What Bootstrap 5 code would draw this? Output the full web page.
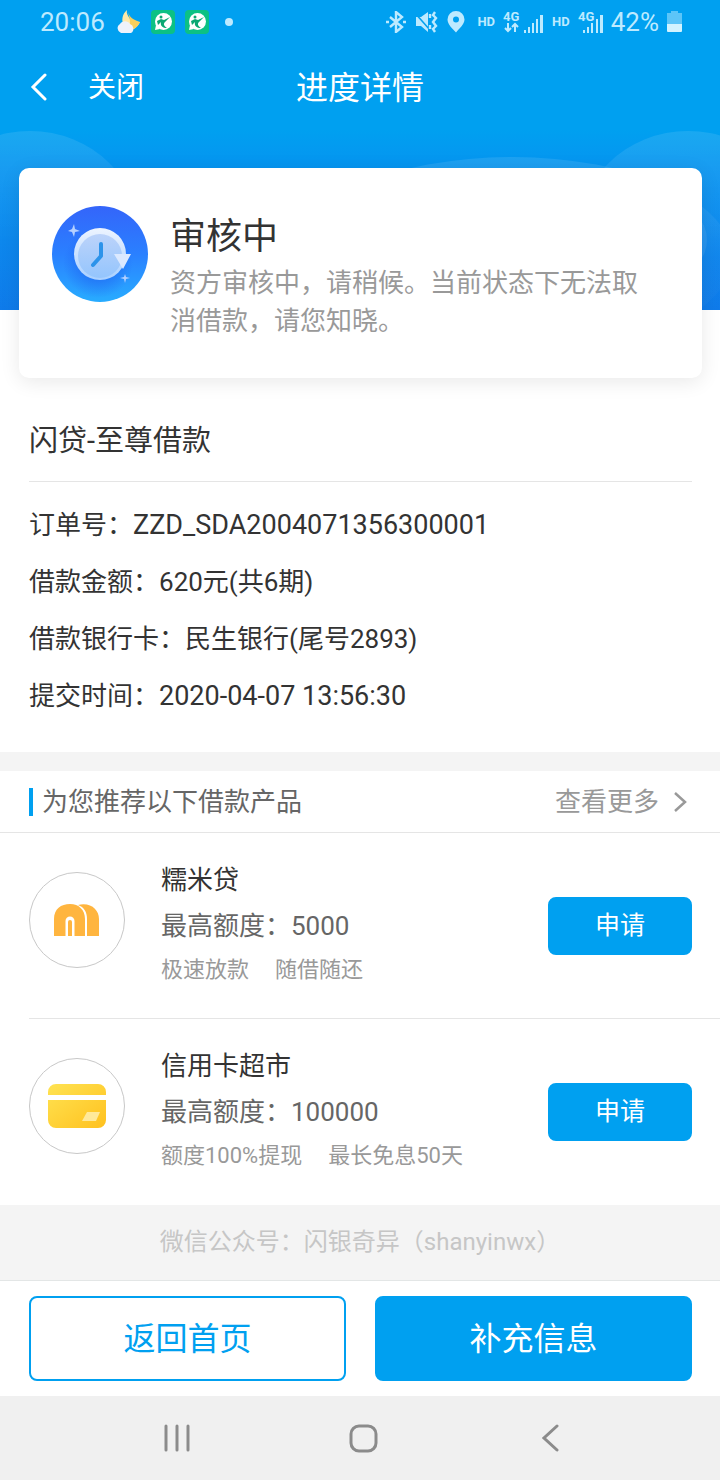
<!DOCTYPE html>
<html lang="zh-CN">
<head>
<meta charset="utf-8">
<meta name="viewport" content="width=device-width, initial-scale=1">
<title>进度详情</title>
<link href="https://cdn.jsdelivr.net/npm/bootstrap@5.3.0/dist/css/bootstrap.min.css" rel="stylesheet">
<style>
  :root { --brand: #00a0f0; --ink: #333; --soft: #999; --line: #e5e5e5; }
  body { font-family: Roboto, "Noto Sans CJK SC", sans-serif; font-size: 26px; line-height: 38px; color: var(--ink); background: #fff; }
  svg { display: block; flex: none; }
  .plain-btn { background: none; border: 0; padding: 0; color: inherit; }

  .status-bar { height: 44px; padding: 0 38px 0 40px; background: var(--brand); color: #bdeaff; }
  .status-hd { font-size: 13px; font-weight: 700; line-height: 20px; }
  .status-dot { width: 8px; height: 8px; border-radius: 50%; background: #bdeaff; }
  .badge-gap { margin-right: 10px; }

  .title-bar { display: grid; grid-template-columns: 1fr auto 1fr; height: 86px; padding: 2px 30px 0; background: var(--brand); color: #fff; }
  .title-bar h1 { font-size: 32px; line-height: 44px; font-weight: 400; }
  .close-btn { font-size: 28px; line-height: 40px; margin-left: 40px; }

  .hero { padding: 38px 18px 0 19px; background: linear-gradient(#00a0f0, #0694f0 38px, #0a78ea) 0 0 / 100% 180px no-repeat; }
  .hero-art { width: 100%; height: 180px; }
  .status-card { border-radius: 10px; padding: 38px 40px 38px 33px; gap: 22px; background: #fff; box-shadow: 0 4px 20px rgba(0, 0, 0, .09); }
  .status-card h2 { font-size: 36px; line-height: 50px; font-weight: 400; margin-bottom: 2px; }
  .status-copy { padding-top: 6px; color: var(--soft); }
  .status-copy h2 { color: var(--ink); }

  .order { padding: 41px 28px 27px 29px; }
  .order h2 { font-size: 29px; line-height: 44px; font-weight: 400; margin: 0; padding-bottom: 18px; border-bottom: 1px solid var(--line); }
  .order dl { margin: 0; padding-top: 15px; line-height: 57px; }
  .order dt { font-weight: 400; }
  .figures { font-size: 27px; }

  .strip { height: 19px; background: #f4f4f4; }
  .rec-head { height: 62px; padding: 0 33px 0 29px; border-bottom: 1px solid var(--line); }
  .rec-head h2 { font-size: 26px; line-height: 28px; font-weight: 400; color: #666; border-left: 4px solid var(--brand); padding-left: 9px; }
  .rec-head a { color: var(--soft); gap: 14px; }

  .product { margin-left: 29px; padding: 0 28px 0 0; height: 186px; }
  .product:not(:last-child) { border-bottom: 1px solid var(--line); }
  .product-logo { width: 96px; height: 96px; border: 1px solid #c8c8c8; border-radius: 50%; margin: 0 36px 12px 0; }
  .product-copy { padding-bottom: 4px; line-height: 46px; color: #666; }
  .product-copy h3 { font-size: 26px; line-height: 46px; font-weight: 400; color: var(--ink); margin: 0; }
  .tags { gap: 26px; font-size: 22px; line-height: 42px; color: var(--soft); }
  .btn-brand { --bs-btn-bg: var(--brand); --bs-btn-color: #fff; --bs-btn-border-color: var(--brand); --bs-btn-hover-bg: #0090dc; --bs-btn-hover-color: #fff; --bs-btn-border-width: 2px; --bs-btn-border-radius: 8px; }
  .btn-frame { --bs-btn-bg: #fff; --bs-btn-color: var(--brand); --bs-btn-border-color: var(--brand); --bs-btn-border-width: 2px; --bs-btn-hover-bg: #eef9ff; --bs-btn-hover-color: var(--brand); --bs-btn-border-radius: 8px; }
  .apply { width: 144px; height: 58px; font-size: 25px; line-height: 36px; padding: 0; }

  .account { padding: 18px 0 19px; font-size: 24px; color: #c6c6c6; background: #f4f4f4; }
  .actions { padding: 15px 28px 15px 29px; gap: 29px; border-top: 1px solid #e3e6e6; }
  .actions .btn { flex: 1 1 0; height: 85px; font-size: 32px; line-height: 44px; }
  .system-nav { height: 84px; padding: 0 76px 0 83px; background: #f0f0f0; }
</style>
</head>
<body>

<div class="status-bar d-flex align-items-center justify-content-between">
  <div class="d-flex align-items-center">
    <span>20:06</span>
    <svg class="ms-2" width="34" height="26" viewBox="0 0 34 26" aria-hidden="true">
      <path d="M14 1C9 5 8 12 11 17s11 6 16-4c-4 1-8 0-10-3s-4-6-3-9z" fill="#ffe9a8"/>
      <path d="M14 1c2 5 3 9 13 12-3 7-9 9-13 7 5-2 3-12 0-19z" fill="#f8cf5c"/>
      <path d="M8 24a5 5 0 0 1-1-9 6 6 0 0 1 10 0 5 5 0 0 1 1 9z" fill="#eef2fb"/>
    </svg>
    <svg class="ms-1 badge-gap" width="24" height="24" viewBox="0 0 24 24" aria-hidden="true">
      <rect width="24" height="24" rx="4" fill="#0cc184"/><circle cx="12.5" cy="11.500" r="8.500" fill="#fff"/><path d="M5 15l-1 5 5-1z" fill="#fff"/>
      <path d="M6 11l4-2 3 1 6-3-5 5c-2 2-1 4 2 6-4 0-7-2-6-6l-3 3z" fill="#0aa873"/><circle cx="10" cy="7" r="1.500" fill="#0aa873"/>
    </svg>
    <svg width="24" height="24" viewBox="0 0 24 24" aria-hidden="true">
      <rect width="24" height="24" rx="4" fill="#0cc184"/><circle cx="12.5" cy="11.500" r="8.500" fill="#fff"/><path d="M5 15l-1 5 5-1z" fill="#fff"/>
      <path d="M6 11l4-2 3 1 6-3-5 5c-2 2-1 4 2 6-4 0-7-2-6-6l-3 3z" fill="#0aa873"/><circle cx="10" cy="7" r="1.500" fill="#0aa873"/>
    </svg>
    <span class="status-dot ms-3"></span>
  </div>
  <div class="d-flex align-items-center gap-2">
    <svg width="21" height="22" viewBox="0 0 21 22" fill="none" stroke="currentColor" stroke-width="2.4" aria-hidden="true">
      <path d="M4 6l12 10-6 5V1l6 5L4 16"/><path d="M0 11h3M17 11h3"/>
    </svg>
    <svg width="24" height="22" viewBox="0 0 24 22" aria-hidden="true">
      <path d="M1 6h5l7-5v20l-7-6H1z" fill="currentColor"/><path d="M0 2l15 17" stroke="#00a0f0" stroke-width="1.500"/>
      <path d="M15 3v4M15 14v4M20 1l-2 3 3 3-3 4 3 4-3 3 2 3" fill="none" stroke="currentColor" stroke-width="2.400"/>
    </svg>
    <svg width="18" height="22" viewBox="0 0 18 22" aria-hidden="true">
      <path d="M9 0a8.500 8.500 0 0 0-8.500 8.500c0 5 5 9 8.500 13 3-4 8.500-8 8.500-13A8.500 8.500 0 0 0 9 0zm0 5.500a3 3 0 1 1 0 6 3 3 0 0 1 0-6z" fill="currentColor" fill-rule="evenodd"/>
    </svg>
    <span class="status-hd ms-1">HD</span>
    <svg width="41" height="28" viewBox="0 0 41 28" fill="currentColor" aria-label="4G">
      <text x="0" y="13" font-size="13" font-weight="700">4G</text>
      <path d="M5 15v8M2 20l3 3 3-3M12 24v-8M9 19l3-3 3 3" fill="none" stroke="currentColor" stroke-width="2"/>
      <path d="M21 22h2v3h-2zM25 19h2v6h-2zM29 15h2v10h-2zM33 11h2v14h-2zM37 7h3v18h-3z"/>
    </svg>
    <span class="status-hd">HD</span>
    <svg width="25" height="28" viewBox="0 0 25 28" fill="currentColor" aria-label="4G">
      <path d="M5 22h2v3H5zM9 19h2v6H9zM13 15h2v10h-2zM18 11h2v14h-2zM22 7h3v18h-3z"/>
      <text x="0" y="13" font-size="13" font-weight="700">4G</text>
    </svg>
    <span>42%</span>
    <svg width="15" height="22" viewBox="0 0 15 22" aria-hidden="true">
      <path d="M4 0h7v2h4v12H0V2h4z" fill="#5cc5f8"/><path d="M0 13h15v7a1 1 0 0 1-1 1H1a1 1 0 0 1-1-1z" fill="#d2f3ff"/>
    </svg>
  </div>
</div>

<header class="title-bar align-items-center">
  <div class="d-flex align-items-center">
    <button class="plain-btn" type="button" aria-label="返回">
      <svg width="18" height="30" viewBox="0 0 18 30" fill="none" stroke="#fff" stroke-width="3" stroke-linecap="round"><path d="M15 2L3 14l12 12"/></svg>
    </button>
    <button class="plain-btn close-btn" type="button">关闭</button>
  </div>
  <h1 class="m-0">进度详情</h1>
</header>

<main>
  <section class="hero position-relative">
    <svg class="hero-art position-absolute top-0 start-0" viewBox="0 0 720 180" preserveAspectRatio="none" aria-hidden="true">
      <defs><linearGradient id="haze" x1="0" y1="0" x2="0" y2="1"><stop offset="0" stop-color="#fff" stop-opacity=".1"/><stop offset=".5" stop-color="#fff" stop-opacity=".02"/></linearGradient></defs>
      <ellipse cx="30" cy="110" rx="112" ry="109" fill="url(#haze)"/>
      <ellipse cx="688" cy="110" rx="112" ry="109" fill="url(#haze)"/>
      <ellipse cx="512" cy="127" rx="220" ry="100" fill="url(#haze)"/>
      <circle cx="672" cy="110" r="35" fill="#fff" fill-opacity=".08"/>
    </svg>
    <div class="status-card position-relative d-flex align-items-start">
      <svg width="96" height="96" viewBox="0 0 96 96" aria-hidden="true">
        <defs>
          <linearGradient id="disc" x1="0" y1="0" x2="0" y2="1"><stop offset="0" stop-color="#3465fa"/><stop offset=".5" stop-color="#2a80ff"/><stop offset="1" stop-color="#28acff"/></linearGradient>
          <linearGradient id="face" x1="0" y1="0" x2="0" y2="1"><stop offset="0" stop-color="#bcd3fa"/><stop offset="1" stop-color="#94c5fd"/></linearGradient>
          <linearGradient id="rim" x1="0" y1="0" x2="0" y2="1"><stop offset="0" stop-color="#edf4ff"/><stop offset="1" stop-color="#a9d0ff"/></linearGradient>
          <radialGradient id="shade"><stop offset=".5" stop-color="#1e60f0" stop-opacity=".5"/><stop offset="1" stop-color="#1e60f0" stop-opacity="0"/></radialGradient>
        </defs>
        <circle cx="48" cy="48" r="48" fill="url(#disc)"/>
        <circle cx="46" cy="57" r="35" fill="url(#shade)"/>
        <circle cx="48" cy="48" r="26" fill="url(#rim)"/>
        <circle cx="48" cy="50" r="22" fill="url(#face)"/>
        <path d="M62 48h17L71 63z" fill="#dbe9ff"/>
        <path d="M49 38v12l-8 9" fill="none" stroke="#2c93ea" stroke-width="4" stroke-linecap="round" stroke-linejoin="round"/>
        <path d="M22 18l1 5 5 2-5 1-1 5-2-5-4-1 4-2zM73 68l1 3 4 1-4 1-1 4-1-4-4-1 4-1z" fill="#b5d0ff"/>
      </svg>
      <div class="status-copy">
        <h2>审核中</h2>
        <p class="m-0">资方审核中，请稍候。当前状态下无法取消借款，请您知晓。</p>
      </div>
    </div>
  </section>

  <section class="order">
    <h2>闪贷-至尊借款</h2>
    <dl>
      <div class="d-flex"><dt>订单号：</dt><dd class="m-0 figures">ZZD_SDA2004071356300001</dd></div>
      <div class="d-flex"><dt>借款金额：</dt><dd class="m-0">620元(共6期)</dd></div>
      <div class="d-flex"><dt>借款银行卡：</dt><dd class="m-0">民生银行(尾号2893)</dd></div>
      <div class="d-flex"><dt>提交时间：</dt><dd class="m-0 figures">2020-04-07 13:56:30</dd></div>
    </dl>
  </section>

  <div class="strip"></div>

  <section>
    <div class="rec-head d-flex align-items-center justify-content-between">
      <h2 class="m-0">为您推荐以下借款产品</h2>
      <a class="d-flex align-items-center text-decoration-none" href="#">查看更多
        <svg width="14" height="22" viewBox="0 0 14 22" fill="none" stroke="#999" stroke-width="2.5" aria-hidden="true"><path d="M2 2l10 9-10 9"/></svg>
      </a>
    </div>
    <ul class="list-unstyled m-0">
      <li class="product d-flex align-items-center">
        <div class="product-logo d-flex align-items-center justify-content-center">
          <svg width="46" height="32" viewBox="0 0 46 32" aria-hidden="true">
            <path d="M0 32V15C0 5 7 0 16 0s15 6 15 15v17H20.500V17a4.500 4.500 0 0 0-9 0v15z" fill="#ffb53f"/>
            <path d="M14 32V18a2 2 0 0 1 4 0v14z" fill="#ffb53f"/>
            <path d="M24 1c13-3 21 5 21 14v17H33V15c0-7-3-12-9-14z" fill="#ffb53f"/>
          </svg>
        </div>
        <div class="product-copy flex-grow-1">
          <h3>糯米贷</h3>
          <div>最高额度：5000</div>
          <div class="tags d-flex"><span>极速放款</span><span>随借随还</span></div>
        </div>
        <button class="btn btn-brand apply" type="button">申请</button>
      </li>
      <li class="product d-flex align-items-center">
        <div class="product-logo d-flex align-items-center justify-content-center">
          <svg width="58" height="44" viewBox="0 0 58 44" aria-hidden="true">
            <defs><linearGradient id="gold" x1="0" y1="0" x2="1" y2="1"><stop offset="0" stop-color="#ffe352"/><stop offset="1" stop-color="#ffc11f"/></linearGradient></defs>
            <path d="M0 11V8a8 8 0 0 1 8-8h42a8 8 0 0 1 8 8v3zM0 16h58v20a8 8 0 0 1-8 8H8a8 8 0 0 1-8-8z" fill="url(#gold)"/>
            <path d="M39 28h13l-4 9H34z" fill="#ffe99b"/>
          </svg>
        </div>
        <div class="product-copy flex-grow-1">
          <h3>信用卡超市</h3>
          <div>最高额度：100000</div>
          <div class="tags d-flex"><span>额度100%提现</span><span>最长免息50天</span></div>
        </div>
        <button class="btn btn-brand apply" type="button">申请</button>
      </li>
    </ul>
  </section>

  <p class="account text-center m-0">微信公众号：闪银奇异（shanyinwx）</p>
</main>

<div class="actions d-flex">
  <button class="btn btn-frame" type="button">返回首页</button>
  <button class="btn btn-brand" type="button">补充信息</button>
</div>

<nav class="system-nav row row-cols-3 g-0">
  <button class="plain-btn col d-flex align-items-center justify-content-center" type="button" aria-label="最近任务">
    <svg width="26" height="28" viewBox="0 0 26 28" stroke="#8b8b8b" stroke-width="3" stroke-linecap="round"><path d="M2 2v24M13 2v24M24 2v24"/></svg>
  </button>
  <button class="plain-btn col d-flex align-items-center justify-content-center" type="button" aria-label="主屏幕">
    <svg width="29" height="29" viewBox="0 0 29 29" fill="none" stroke="#8b8b8b" stroke-width="3"><rect x="2" y="2" width="25" height="25" rx="8"/></svg>
  </button>
  <button class="plain-btn col d-flex align-items-center justify-content-center" type="button" aria-label="返回">
    <svg width="18" height="28" viewBox="0 0 18 28" fill="none" stroke="#8b8b8b" stroke-width="3" stroke-linecap="round"><path d="M15 2L2 14l13 12"/></svg>
  </button>
</nav>

<script src="https://cdn.jsdelivr.net/npm/bootstrap@5.3.0/dist/js/bootstrap.bundle.min.js"></script>
</body>
</html>
